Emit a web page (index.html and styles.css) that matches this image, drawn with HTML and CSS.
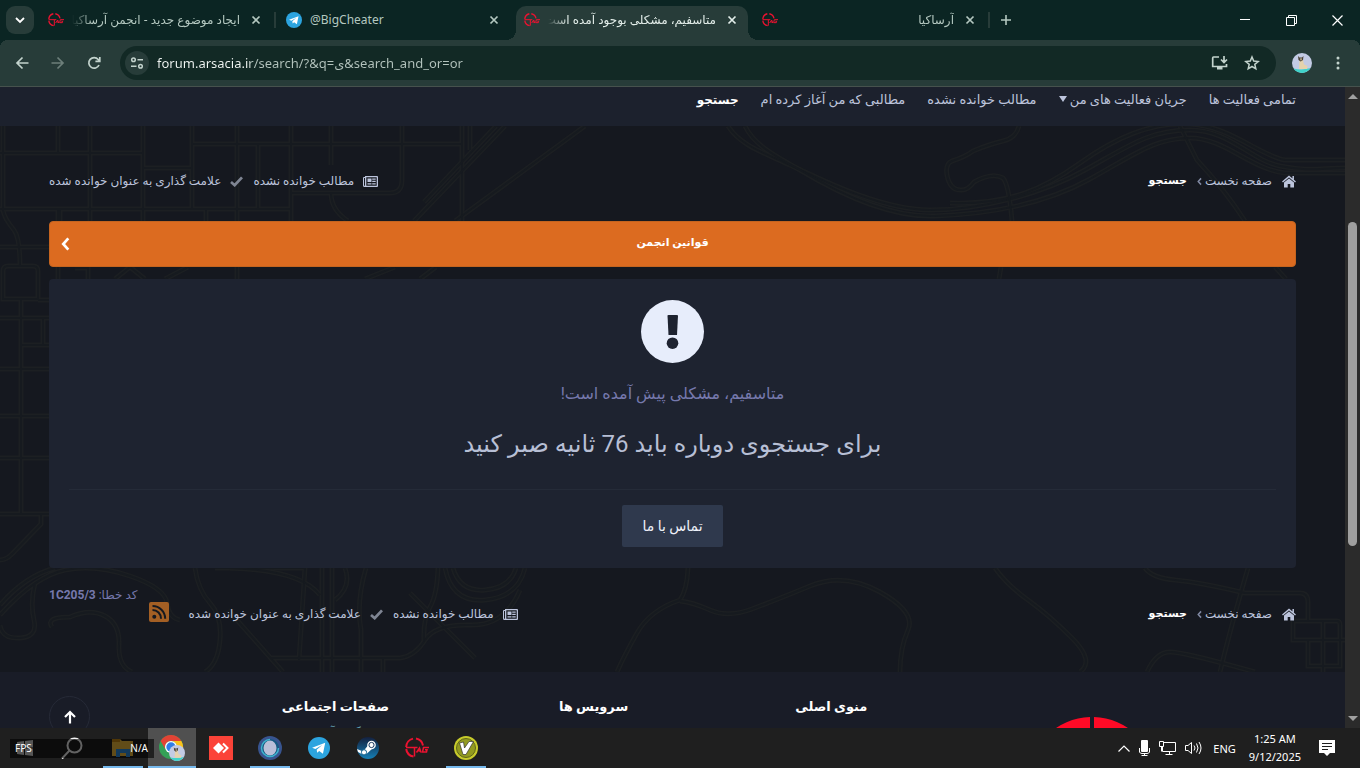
FILE: index.html
```html
<!DOCTYPE html>
<html lang="fa">
<head>
    <meta charset="UTF-8">
    <meta name="viewport" content="width=device-width, initial-scale=1.0">
    <title>متاسفیم، مشکلی بوجود آمده است</title>
    <link rel="stylesheet" href="styles.css">
</head>
<body>

    <!-- Shared icons -->
    <svg class="sprite" aria-hidden="true">
        <symbol id="i-close" viewBox="0 0 16 16"><path d="M4.500 4.500l7 7M11.500 4.500l-7 7" fill="none" stroke="currentColor" stroke-width="1.700"/></symbol>
        <symbol id="i-arsacia" viewBox="0 0 24 24">
            <path d="M1.200 11A8.800 8.800 0 0 1 8 2.600M11 2.600A8.800 8.800 0 0 1 18 9.500M1.200 13A8.800 8.800 0 0 0 8.500 20.500" fill="none" stroke="#ec1230" stroke-width="2"/>
            <path d="M1 11.500H12.500M9.500 12V20.500M11.500 16.500L14.500 12L16 16.500M13.500 15H15.500M24 11.500H18.500L17.500 16H21.500L22 13.800H20" fill="none" stroke="#ec1230" stroke-width="1.500"/>
        </symbol>
        <symbol id="i-telegram" viewBox="0 0 24 24">
            <circle cx="12" cy="12" r="12" fill="#2ca4df"/>
            <path d="M4.500 11.800L18.800 6.200L16.300 18.300L12.200 15.200L10 17.300L9.500 13.800L15.500 8.800L8 13.200Z" fill="#fff"/>
        </symbol>
        <symbol id="i-news" viewBox="0 0 15 11">
            <path fill="currentColor" fill-rule="evenodd" d="M2 0H14Q15 0 15 1V10Q15 11 14 11H1.500Q0 11 0 9.500V2Q0 1 1 1H2ZM3.300 1.300V9.700H13.700V1.300ZM1 2V9.500Q1.500 10 2 9.500V2Z"/>
            <path fill="currentColor" d="M4.500 2.500H8.500V6H4.500ZM9.200 2.500H12.700V3.700H9.200ZM9.200 4.800H12.700V6H9.200ZM4.500 7.200H8.500V8.600H4.500ZM9.200 7.200H12.700V8.600H9.200Z"/>
        </symbol>
        <symbol id="i-check" viewBox="0 0 14 12"><path d="M1 6.500L5 10L13 1.500" fill="none" stroke="currentColor" stroke-width="3"/></symbol>
        <symbol id="i-home" viewBox="0 0 14 13">
            <path d="M7 3.400L2 7.600V12.500H5.700V9H8.300V12.500H12V7.600Z" fill="currentColor"/>
            <path d="M.5 7L7 1.500L13.500 7M11.200 1V4.500" fill="none" stroke="currentColor" stroke-width="1.500"/>
        </symbol>
        <symbol id="i-chevron" viewBox="0 0 8 12"><path d="M6.500 1L2 6L6.500 11" fill="none" stroke="currentColor" stroke-width="2.400"/></symbol>
        <symbol id="i-avatar" viewBox="0 0 20 20">
            <circle cx="10" cy="10" r="10" fill="#c3cbe4"/>
            <path d="M1.500 15.500Q10 17.500 18.500 15A10 10 0 0 1 1.500 15.500Z" fill="#40d3ca"/>
            <path d="M7.500 7L7 16H15L15.500 13L12 11.500L11 7Z" fill="#e5d3ad"/>
            <path d="M6 3L7.500 4.500H10L11.500 3L11 7L8.700 8.500L6.500 7Z" fill="#4a4036"/>
            <path d="M8 5.500H10L9 8Z" fill="#e5d3ad"/>
        </symbol>
    </svg>

    <!-- Browser tabs -->
    <header class="tab-strip">
        <button class="tab-search" aria-label="Search tabs"><svg width="12" height="12" viewBox="0 0 12 12"><path d="M2 4l4 4l4-4" fill="none" stroke="currentColor" stroke-width="1.800"/></svg></button>
        <nav class="tabs">
            <div class="tab">
                <svg class="favicon"><use href="#i-arsacia"/></svg>
                <span class="tab-title rtl">ایجاد موضوع جدید - انجمن آرساکیا</span>
                <button class="tab-close" aria-label="Close"><svg><use href="#i-close"/></svg></button>
            </div>
            <div class="tab divided">
                <svg class="favicon"><use href="#i-telegram"/></svg>
                <span class="tab-title">@BigCheater</span>
                <button class="tab-close" aria-label="Close"><svg><use href="#i-close"/></svg></button>
            </div>
            <div class="tab active">
                <svg class="favicon"><use href="#i-arsacia"/></svg>
                <span class="tab-title rtl">متاسفیم، مشکلی بوجود آمده است</span>
                <button class="tab-close" aria-label="Close"><svg><use href="#i-close"/></svg></button>
            </div>
            <div class="tab">
                <svg class="favicon"><use href="#i-arsacia"/></svg>
                <span class="tab-title rtl">آرساکیا</span>
                <button class="tab-close" aria-label="Close"><svg><use href="#i-close"/></svg></button>
            </div>
            <button class="new-tab divided" aria-label="New tab"><svg width="12" height="12" viewBox="0 0 12 12"><path d="M6 1V11M1 6H11" stroke="currentColor" stroke-width="1.600"/></svg></button>
        </nav>
        <div class="window-buttons">
            <button aria-label="Minimize"><svg width="10" height="10"><path d="M0 4.500H10" stroke="#fff"/></svg></button>
            <button aria-label="Restore"><svg width="11" height="11"><path d="M.5 2.500H8.500V10.500H.5ZM2.500 2.500V.5H10.500V8.500H8.500" fill="none" stroke="#fff"/></svg></button>
            <button aria-label="Close window"><svg width="11" height="11"><path d="M.5.5l10 10M10.500.5l-10 10" stroke="#fff" stroke-width="1.200"/></svg></button>
        </div>
    </header>

    <!-- Address bar -->
    <div class="toolbar">
        <button class="tool" aria-label="Back"><svg width="14" height="14" viewBox="0 0 14 14"><path d="M7.500 1.500L2 7L7.500 12.500M2 7H13.500" fill="none" stroke="currentColor" stroke-width="1.700"/></svg></button>
        <button class="tool" aria-label="Forward" disabled><svg width="14" height="14" viewBox="0 0 14 14"><path d="M6.500 1.500L12 7L6.500 12.500M12 7H.5" fill="none" stroke="currentColor" stroke-width="1.700"/></svg></button>
        <button class="tool" aria-label="Reload"><svg width="14" height="14" viewBox="0 0 14 14"><path d="M12 9A5.300 5.300 0 1 1 11.200 3.500L12.500 5M12.800 1V5.400H8.400" fill="none" stroke="currentColor" stroke-width="1.700"/></svg></button>
        <div class="omnibox">
            <button class="site-info" aria-label="Site information"><svg width="14" height="14" viewBox="0 0 14 14"><g fill="none" stroke="currentColor" stroke-width="1.500"><circle cx="3.500" cy="3.700" r="1.800"/><path d="M7.500 3.700H13M1 10.300H6.500"/><circle cx="10.500" cy="10.300" r="1.800"/></g></svg></button>
            <input class="url" type="text" aria-label="Address" value="forum.arsacia.ir/search/?&amp;q=ی&amp;search_and_or=or">
            <button class="tool" aria-label="Install"><svg width="18" height="16" viewBox="0 0 18 16"><path d="M8 2H2.500Q1.700 2 1.700 3V11.500H15.500V9M13 1V7M10 4.500L13 7.500L16 4.500" fill="none" stroke="currentColor" stroke-width="1.700"/><path d="M6 12H11.500V14.500H6Z" fill="currentColor"/></svg></button>
            <button class="tool" aria-label="Bookmark"><svg width="16" height="16" viewBox="0 0 16 16"><path d="M8 2L9.700 6.100L14.200 6.500L10.800 9.400L11.800 13.800L8 11.500L4.200 13.800L5.200 9.400L1.800 6.500L6.300 6.100Z" fill="none" stroke="currentColor" stroke-width="1.500"/></svg></button>
        </div>
        <button class="tool profile" aria-label="Profile"><svg width="20" height="20"><use href="#i-avatar"/></svg></button>
        <button class="tool" aria-label="Menu"><svg width="4" height="14" viewBox="0 0 4 14" fill="currentColor"><circle cx="2" cy="2" r="1.500"/><circle cx="2" cy="7" r="1.500"/><circle cx="2" cy="12" r="1.500"/></svg></button>
    </div>

    <div class="viewport">
        <div class="page" dir="rtl">

            <!-- Activity menu -->
            <nav class="sub-nav">
                <a href="#">تمامی فعالیت ها</a>
                <a href="#">جریان فعالیت های من <i class="caret"></i></a>
                <a href="#">مطالب خوانده نشده</a>
                <a href="#">مطالبی که من آغاز کرده ام</a>
                <a href="#" class="current">جستجو</a>
            </nav>

            <main class="content">
                <!-- City map behind the content -->
                <svg class="map" viewBox="0 126 1345 546" preserveAspectRatio="xMidYMid slice" aria-hidden="true">
                    <defs>
                        <g id="roads" fill="none">
                            <path d="M3 126V209M58 126V153M90 126V221M143 126V221M192 126V209M237 126V221M258 144V209M291 126V221M331 126V144M402 126V180Q402 193 390 193H291M331 144V165M462 126V221M0 153H143M143 168H192M192 144H462M0 209H291M60 209V221M206 209V221M331 193Q331 210 348 221"/>
                            <path d="M3 210Q4 218 14 230Q20 238 20 266M0 247H49M58 209V279M8 266H33Q38 266 38 271V299H3V271Q3 266 8 266ZM75 268H88V279M237 267V279M115 279L130 267L145 279M165 279L188 267"/>
                            <path d="M21 300V514M43 318V345M38 300H49M0 318H49M21 345H49M0 369H49M0 416H49M0 458H49M0 514H49M41 514V524L12 554Q6 560 0 560"/>
                            <path d="M505 126L414 221M496 126L424 202M585 126L455 221M365 279L395 267M420 279L436 267M470 126V150"/>
                            <path d="M728 126C740 145 762 152 790 165S880 210 930 210S1040 195 1085 170S1150 130 1190 130S1250 160 1280 166S1320 168 1345 168"/>
                            <path d="M745 126C755 147 780 158 800 170S880 218 935 216S1045 204 1090 179S1155 138 1190 138S1250 169 1285 173H1345M950 203C1010 205 1045 188 1080 163S1150 122 1190 124S1260 156 1285 160H1345"/>
                            <path d="M1019 126Q1016 138 1003 141T973 151Q965 157 952 161Q945 164 947 175Q950 191 962 190Q968 190 974 182Q992 172 1003 178Q1009 185 1012 221M1001 267L999 279M1180 126L1197 160Q1225 190 1245 221M1275 267L1286 279"/>
                            <path d="M0 615Q35 576 65 570T130 576T167 603T180 620M0 605Q25 576 55 568M35 583Q30 603 34 620T20 638T0 625M52 627Q45 617 70 617Q90 608 105 616T119 645T132 672"/>
                            <path d="M195 568Q198 590 210 603T220 640T205 672M228 610L283 672M215 568H305L299 660M322 568V672M332 568V672M345 568Q352 587 335 600M366 568Q356 602 361 630V672M270 658H400Q415 656 425 640T470 625T520 590M383 658V672"/>
                            <path d="M445 568Q452 603 485 600T525 568M453 568Q460 592 485 590T516 568M438 568Q437 595 430 607T424 641M410 593L475 658M230 568Q300 570 320 595"/>
                            <path d="M688 568Q687 590 680 600Q650 610 637 633T617 672M680 601Q692 602 710 610T752 609T810 586T880 592T908 630T900 672M995 568Q1007 585 1028 600T1072 638T1080 672"/>
                            <path d="M1145 568Q1152 578 1175 580T1245 593H1300Q1308 593 1308 602V621M1248 568Q1230 630 1220 672M1147 672Q1156 652 1170 652T1255 672M1293 621H1337Q1340 621 1340 625V666H1308V640M1293 621V640H1345M1323 621V672"/>
                        </g>
                    </defs>
                    <use href="#roads" class="road-edge"/>
                    <use href="#roads" class="road-fill"/>
                </svg>

                <div class="crumb-row">
                    <ol class="crumbs">
                        <li><a href="#"><svg width="14" height="13"><use href="#i-home"/></svg>صفحه نخست <svg class="crumb-arrow" width="5" height="9"><use href="#i-chevron"/></svg></a></li>
                        <li class="here">جستجو</li>
                    </ol>
                    <div class="crumb-tools">
                        <a href="#"><svg width="15" height="11"><use href="#i-news"/></svg>مطالب خوانده نشده</a>
                        <a href="#"><svg class="dim" width="13" height="11"><use href="#i-check"/></svg>علامت گذاری به عنوان خوانده شده</a>
                    </div>
                </div>

                <a href="#" class="announcement">
                    <span>قوانین انجمن</span>
                    <svg width="9" height="14"><use href="#i-chevron"/></svg>
                </a>

                <!-- Error message -->
                <section class="error-box">
                    <svg width="64" height="64" viewBox="0 0 64 64"><circle cx="31.500" cy="31.500" r="31.500" fill="#e7edfb"/><path d="M26.500 15.500Q26.500 15 27.500 15H35.500Q37 15 37 15.500L36 35H27.500Z" fill="#1e2330"/><circle cx="31.500" cy="43.200" r="5.800" fill="#1e2330"/></svg>
                    <p class="error-lead">متاسفیم، مشکلی پیش آمده است!</p>
                    <h1>برای جستجوی دوباره باید 76 ثانیه صبر کنید</h1>
                    <hr>
                    <a href="#" class="contact">تماس با ما</a>
                </section>

                <div class="bottom-row">
                    <div class="crumb-row">
                        <ol class="crumbs">
                            <li><a href="#"><svg width="14" height="13"><use href="#i-home"/></svg>صفحه نخست <svg class="crumb-arrow" width="5" height="9"><use href="#i-chevron"/></svg></a></li>
                            <li class="here">جستجو</li>
                        </ol>
                        <div class="crumb-tools">
                            <a href="#"><svg width="15" height="11"><use href="#i-news"/></svg>مطالب خوانده نشده</a>
                            <a href="#"><svg class="dim" width="13" height="11"><use href="#i-check"/></svg>علامت گذاری به عنوان خوانده شده</a>
                            <a href="#" class="rss" aria-label="RSS"><svg width="20" height="20" viewBox="0 0 20 20"><rect width="20" height="20" rx="2" fill="#a35f24"/><circle cx="5.300" cy="14.700" r="2" fill="#15181f"/><path d="M3.500 8A8.500 8.500 0 0 1 12 16.700M3.500 4A12.700 12.700 0 0 1 16.200 16.700" fill="none" stroke="#15181f" stroke-width="2"/></svg></a>
                        </div>
                    </div>
                    <p class="error-code">کد خطا: <b>1C205/3</b></p>
                </div>
            </main>

            <footer class="site-footer">
                <div class="footer-logo"><svg width="128" height="128" viewBox="0 0 128 128"><path d="M62 0A64 64 0 0 0 0 62H62ZM66 0A64 64 0 0 1 128 62H66Z" fill="#ff0a26"/></svg></div>
                <div>
                    <h2>منوی اصلی</h2>
                    <ul><li><a href="#">انجمن ها</a></li></ul>
                </div>
                <div>
                    <h2>سرویس ها</h2>
                    <ul><li><a href="#">پنل کاربری</a></li></ul>
                </div>
                <div>
                    <h2>صفحات اجتماعی</h2>
                    <ul><li><a href="#">اینستاگرام آرساکیا</a></li></ul>
                </div>
                <button class="to-top" aria-label="Top"><svg width="14" height="14" viewBox="0 0 14 14"><path d="M7 13.500V2M2 7L7 2L12 7" fill="none" stroke="currentColor" stroke-width="2.200"/></svg></button>
            </footer>
        </div>

        <div class="scrollbar">
            <i class="arrow up"></i>
            <div class="track"><div class="thumb"></div></div>
            <i class="arrow down"></i>
        </div>
    </div>

    <!-- Windows taskbar -->
    <div class="taskbar">
        <div class="apps">
            <button aria-label="Start"><svg width="16" height="16" viewBox="0 0 16 16" fill="#d8d8d8"><path d="M0 2L7 1V7.500H0ZM8 1L16 0V7.500H8ZM0 8.500H7V15L0 14ZM8 8.500H16V16L8 15Z"/></svg></button>
            <button aria-label="Search"><svg width="26" height="22" viewBox="0 0 26 22" fill="none" stroke="#f4f4f4" stroke-width="2"><circle cx="13.500" cy="8.500" r="7"/><path d="M8.500 13.500L1 21.500"/></svg></button>
            <button class="open" aria-label="File Explorer"><svg width="22" height="18" viewBox="0 0 22 18"><path d="M0 0H8L10 2H21V17H0Z" fill="#f2bd3d"/><path d="M0 0H8V3H0Z" fill="#c98a13"/><path d="M4 10H18V18H14V14H8V18H4Z" fill="#2f8fe0"/></svg></button>
            <button class="open focused" aria-label="Chrome"><svg width="26" height="26" viewBox="0 0 26 26">
                <circle cx="12" cy="12" r="12" fill="#34a056"/>
                <path d="M1.600 6A12 12 0 0 1 22.400 6H12A6 6 0 0 0 6.800 15Z" fill="#e24335"/>
                <path d="M22.400 6A12 12 0 0 1 12 24L17.200 15A6 6 0 0 0 12 6Z" fill="#fbc11a"/>
                <circle cx="12" cy="12" r="6" fill="#fff"/><circle cx="12" cy="12" r="4.700" fill="#2f7de8"/>
                <svg x="10" y="10" width="16" height="16"><use href="#i-avatar"/></svg></svg></button>
            <button aria-label="AnyDesk"><svg width="24" height="24" viewBox="0 0 24 24"><rect width="24" height="24" fill="#fb4338"/><path d="M9.500 6.500L15 12L9.500 17.500L4 12Z" fill="#fff"/><path d="M14 7.500L18.500 12L14 16.500" fill="none" stroke="#fff" stroke-width="2"/></svg></button>
            <button class="open" aria-label="Monitor"><svg width="24" height="24" viewBox="0 0 24 24"><circle cx="12" cy="12" r="12" fill="#38548f"/><circle cx="12" cy="12" r="9" fill="#165a82"/><ellipse cx="12" cy="12" rx="6.500" ry="7.500" fill="#b9bfd8"/><path d="M12 3.500A8.500 8.500 0 1 0 20.500 12" fill="none" stroke="#3fb4cf" stroke-width="1.500"/></svg></button>
            <button aria-label="Telegram"><svg width="22" height="22"><use href="#i-telegram"/></svg></button>
            <button aria-label="Steam"><svg width="22" height="22" viewBox="0 0 22 22"><defs><linearGradient id="steam" x2="0" y2="1"><stop stop-color="#14203e"/><stop offset="1" stop-color="#157fb5"/></linearGradient></defs><circle cx="11" cy="11" r="11" fill="url(#steam)"/><path d="M0 12L6 14.500L11 8.500L16 11L10 16.500L6.500 18L1 15Z" fill="#fff"/><circle cx="14.500" cy="8" r="4.300" fill="#fff"/><circle cx="14.500" cy="8" r="2.600" fill="#fff" stroke="#17355c" stroke-width="1"/><circle cx="7" cy="15.300" r="2.600" fill="#fff" stroke="#17658f"/></svg></button>
            <button aria-label="Arsacia"><svg width="24" height="24"><use href="#i-arsacia"/></svg></button>
            <button class="open" aria-label="Player"><svg width="24" height="24" viewBox="0 0 24 24"><circle cx="12" cy="12" r="12" fill="#c7cb2b"/><circle cx="12" cy="12" r="9.500" fill="#929a20" stroke="#5f651a"/><path d="M5.500 7L9.500 6L10.500 12L15 5.500H19.500L12 18.500H9Z" fill="#fff" stroke="#333" stroke-width=".7"/></svg></button>
        </div>
        <div class="tray">
            <svg width="12" height="7" viewBox="0 0 12 7"><path d="M.5 6.500L6 1L11.500 6.500" fill="none" stroke="#fff" stroke-width="1.200"/></svg>
            <svg width="11" height="16" viewBox="0 0 11 16"><rect x="2" width="7" height="12" rx="1" fill="#fff"/><path d="M.5 8V12Q1 13.500 3 13.500H8Q10 13.500 10.500 12V8M5.500 13.500V15.500M2.500 15.500H8.500" fill="none" stroke="#fff"/></svg>
            <svg width="17" height="14" viewBox="0 0 17 14"><path d="M5 1.500H16.500V10.500H3.500V5.500M10.500 10.500V13.500M6.500 13.500H13.500M.5.500H4.500V5.500H.5ZM2.500 5.500V10.500" fill="none" stroke="#fff"/></svg>
            <svg width="17" height="14" viewBox="0 0 17 14"><path d="M.5 4.500H3L6.500 1.500V12.500L3 9.500H.5ZM9 4.500Q11 7 9 9.500M11.500 2.500Q14.500 7 11.500 11.500M14 1Q18 7 14 13" fill="none" stroke="#fff"/></svg>
            <span>ENG</span>
            <time>1:25 AM<br>9/12/2025</time>
            <svg width="16" height="16" viewBox="0 0 16 16"><path d="M0 0H16V13H11L8 16L5 13H0Z" fill="#fff"/><path d="M3 3.500H13M3 6.500H13M3 9.500H9" stroke="#1f1f1f"/></svg>
        </div>
        <div class="fps-overlay"><span>FPS</span><span>N/A</span></div>
    </div>

</body>
</html>
```
FILE: styles.css
```css
* {
    margin: 0;
    padding: 0;
    box-sizing: border-box;
}

body {
    display: flex;
    flex-direction: column;
    height: 100vh;
    overflow: hidden;
    background: #15181f;
    color: #bcc4dc;
    font-family: Roboto, "DejaVu Sans", sans-serif;
    font-size: 12px;
}

button {
    display: flex;
    align-items: center;
    justify-content: center;
    border: 0;
    background: none;
    color: inherit;
    font: inherit;
}

a {
    color: inherit;
    text-decoration: none;
}

svg {
    flex: none;
}

ol, ul {
    list-style: none;
}

.sprite {
    position: absolute;
    width: 0;
    height: 0;
}

/* Browser tabs */
.tab-strip {
    display: flex;
    flex: none;
    height: 40px;
    padding-left: 6px;
    background: #0b2523;
    color: #b4c8c0;
    font-family: "Noto Sans", "DejaVu Sans", sans-serif;
}

.tab-search {
    width: 28px;
    height: 28px;
    margin-top: 6px;
    border-radius: 9px;
    background: #273c39;
    color: #fff;
}

.tabs {
    display: flex;
    flex: 1;
    gap: 6px;
    padding: 6px 6px 0;
}

.tab {
    display: flex;
    align-items: center;
    gap: 8px;
    width: 232px;
    height: 34px;
    padding: 0 8px 6px;
    position: relative;
}

.tab.active {
    border-radius: 10px 10px 0 0;
    background: #273c39;
    color: #e2ede9;
}

.tab.active::before,
.tab.active::after {
    content: "";
    position: absolute;
    bottom: 0;
    width: 10px;
    height: 10px;
}

.tab.active::before {
    right: 100%;
    background: radial-gradient(circle at 0 0, transparent 10px, #273c39 10px);
}

.tab.active::after {
    left: 100%;
    background: radial-gradient(circle at 100% 0, transparent 10px, #273c39 10px);
}

.favicon {
    width: 16px;
    height: 16px;
}

.tab-title {
    flex: 1;
    overflow: hidden;
    white-space: nowrap;
    line-height: 20px;
}

.tab-title.rtl {
    direction: rtl;
    -webkit-mask-image: linear-gradient(90deg, transparent, #000 20px);
    mask-image: linear-gradient(90deg, transparent, #000 20px);
}

.tab-close svg {
    width: 16px;
    height: 16px;
}

.divided::before {
    content: "";
    position: absolute;
    left: -4px;
    top: 6px;
    width: 2px;
    height: 16px;
    background: #273c39;
}

.new-tab {
    position: relative;
    width: 28px;
    height: 28px;
}

.window-buttons {
    display: flex;
}

.window-buttons button {
    width: 46px;
}

/* Address bar */
.toolbar {
    display: flex;
    flex: none;
    align-items: center;
    gap: 8px;
    height: 47px;
    padding: 0 8px;
    border-bottom: 1px solid #46524d;
    background: radial-gradient(circle at 8px 8px, #273c39 8px, #0b2523 8px) 0 0 / 8px 8px no-repeat,
        radial-gradient(circle at 0 8px, #273c39 8px, #0b2523 8px) 100% 0 / 8px 8px no-repeat,
        #273c39;
    color: #c3d3cd;
}

.tool {
    width: 28px;
    height: 28px;
}

.tool:disabled {
    color: #6d7f7a;
}

.omnibox {
    display: flex;
    align-items: center;
    gap: 4px;
    flex: 1;
    height: 34px;
    margin-left: 4px;
    padding: 0 10px 0 5px;
    border-radius: 17px;
    background: #122925;
}

.site-info {
    width: 24px;
    height: 24px;
    border-radius: 50%;
    background: #273c39;
}

.url {
    flex: 1;
    height: 24px;
    padding-left: 4px;
    border: 0;
    outline: 0;
    background: linear-gradient(90deg, #f2f7f5 97px, #b4c4be 97px);
    -webkit-background-clip: text;
    background-clip: text;
    color: transparent;
    font-family: "Noto Sans", "DejaVu Sans", sans-serif;
    font-size: 13px;
}

.profile {
    margin-left: 4px;
}

/* Scrolled page area */
.viewport {
    display: flex;
    flex: 1;
    min-height: 0;
}

.page {
    flex: 1;
    overflow: hidden;
}

.sub-nav {
    display: flex;
    gap: 22px;
    height: 39px;
    padding: 0 49px;
    background: #1c212d;
    font-size: 13px;
    line-height: 26px;
}

.sub-nav .current {
    color: #fff;
    font-size: 12px;
    font-weight: bold;
}

.caret {
    display: inline-block;
    border: 4px solid transparent;
    border-top: 6px solid #bcc4dc;
    border-bottom: 0;
    vertical-align: 2px;
}

.content {
    position: relative;
    padding: 39px 49px 42px;
    z-index: 0;
}

.map {
    position: absolute;
    inset: 0;
    width: 100%;
    height: 100%;
    z-index: -1;
}

.road-edge {
    stroke: #1c1f22;
    stroke-width: 5;
}

.road-fill {
    stroke: #161a1f;
    stroke-width: 2;
}

.crumb-row {
    display: flex;
    flex: 1;
    justify-content: space-between;
    line-height: 32px;
}

.crumbs,
.crumbs a,
.crumb-tools,
.crumb-tools a {
    display: flex;
    align-items: center;
}

.crumbs a {
    gap: 10px;
}

.crumbs .crumb-arrow {
    margin-right: -7px;
    color: #8089a3;
}

.here {
    margin-right: 10px;
    color: #fff;
    font-size: 11px;
    font-weight: bold;
}

.crumb-tools {
    gap: 10px;
}

.crumb-tools a {
    gap: 9px;
}

.dim {
    color: #7f8593;
}

.announcement {
    display: flex;
    align-items: center;
    height: 46px;
    margin: 24px 0 12px;
    padding: 0 11px;
    border: 1px solid #c4641f;
    border-radius: 4px;
    background: #dc6b20;
    color: #fff;
    font-size: 11px;
    font-weight: bold;
}

.announcement span {
    flex: 1;
    padding: 0 9px 4px 0;
    text-align: center;
}

.error-box {
    display: flex;
    flex-direction: column;
    align-items: center;
    padding: 21px 20px;
    border-radius: 4px;
    background: #1e2330;
}

.error-lead {
    margin-top: 18px;
    color: #7679ad;
    font-size: 16px;
    line-height: 24px;
}

.error-box h1 {
    margin-top: 18px;
    color: #b7bfd5;
    font-size: 24px;
    font-weight: normal;
    line-height: 40px;
}

.error-box hr {
    width: 100%;
    margin: 25px 0 15px;
    border: 0;
    border-top: 1px solid #252b38;
}

.contact {
    padding: 0 20px;
    border-radius: 2px;
    background: #2f394d;
    color: #eef1fa;
    font-size: 14px;
    line-height: 42px;
}

.bottom-row {
    display: flex;
    gap: 11px;
    padding-top: 17px;
}

.bottom-row .crumb-row {
    padding-top: 13px;
}

.rss {
    margin-right: 10px;
    padding-bottom: 4px;
}

.error-code {
    color: #7679ad;
    line-height: 20px;
}

/* Footer */
.site-footer {
    display: grid;
    grid-template-columns: 43fr 24fr 24fr 30fr auto;
    min-height: 200px;
    padding: 24px 49px 0;
    background: #191c27;
}

.footer-logo {
    display: flex;
    justify-content: center;
    padding: 21px 0 0 20px;
}

.site-footer h2 {
    color: #fff;
    font-size: 13px;
    line-height: 22px;
}

.site-footer li {
    padding-top: 5px;
    color: #6fb3c4;
    line-height: 20px;
}

.to-top {
    width: 41px;
    height: 41px;
    border: 1px solid #262a37;
    border-radius: 50%;
    color: #fff;
}

/* Scrollbar */
.scrollbar {
    display: flex;
    flex-direction: column;
    align-items: center;
    justify-content: space-between;
    width: 15px;
    padding: 7px 0;
    background: #2b2b2b;
}

.arrow {
    border: 5px solid transparent;
}

.up {
    border-top: 0;
    border-bottom-color: #a0a0a0;
}

.down {
    border-bottom: 0;
    border-top-color: #a0a0a0;
}

.track {
    flex: 1;
    padding-top: 123px;
}

.thumb {
    width: 9px;
    height: 324px;
    border-radius: 5px;
    background: #9f9f9f;
}

/* Taskbar */
.taskbar {
    display: flex;
    flex: none;
    justify-content: space-between;
    position: relative;
    height: 40px;
    padding: 0 25px 0 1px;
    background: #1f1f1f;
    color: #fff;
    font-family: "Noto Sans", sans-serif;
}

.apps {
    display: flex;
    gap: 1px;
}

.apps button {
    position: relative;
    width: 48px;
}

.open::after {
    content: "";
    position: absolute;
    bottom: 0;
    left: 4px;
    right: 4px;
    height: 2px;
    background: #76b9ed;
}

.focused {
    background: #505050;
}

.focused::after {
    left: 0;
    right: 0;
}

.tray {
    display: flex;
    align-items: center;
    gap: 9px;
    font-size: 11px;
}

.tray time {
    margin: 0 9px 0 4px;
    text-align: center;
    line-height: 18px;
}

.tray span {
    margin-left: 2px;
}

.fps-overlay {
    display: flex;
    justify-content: space-between;
    position: absolute;
    left: 10px;
    top: 11px;
    width: 144px;
    padding: 0 6px 0 5px;
    background: rgba(0, 0, 0, 0.6);
    font-size: 10px;
    line-height: 19px;
}
```
